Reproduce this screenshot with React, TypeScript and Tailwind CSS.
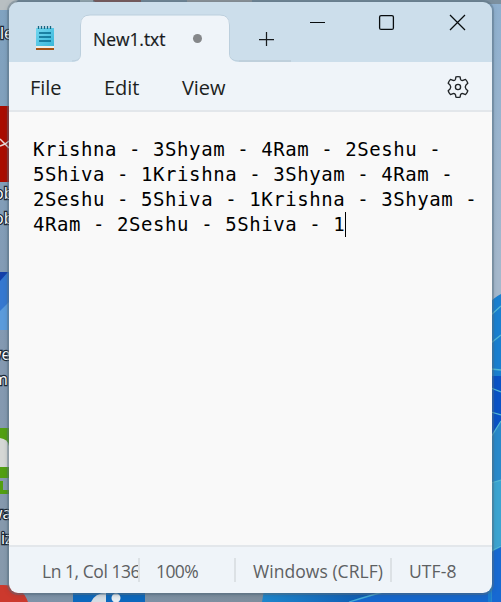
const uiFont = "font-['Open_Sans','Noto_Sans',sans-serif]";

const documentLines = [
  'Krishna - 3Shyam - 4Ram - 2Seshu -',
  '5Shiva - 1Krishna - 3Shyam - 4Ram -',
  '2Seshu - 5Shiva - 1Krishna - 3Shyam -',
  '4Ram - 2Seshu - 5Shiva - 1',
];

function Desktop() {
  return (
    <svg className="absolute inset-0" width="501" height="602" viewBox="0 0 501 602" aria-hidden="true">
      <defs>
        <linearGradient id="sky" x1="0" y1="0" x2="0" y2="1">
          <stop offset="0" stopColor="#8fb0cf" />
          <stop offset="0.45" stopColor="#a5b8cc" />
        </linearGradient>
        <linearGradient id="left" x1="0" y1="0" x2="0" y2="1">
          <stop offset="0" stopColor="#80a3c1" />
          <stop offset="0.6" stopColor="#8499b1" />
          <stop offset="1" stopColor="#8799ab" />
        </linearGradient>
        <linearGradient id="bottom" x1="0" y1="0" x2="1" y2="0">
          <stop offset="0" stopColor="#7f93a9" />
          <stop offset="0.5" stopColor="#7d91a5" />
          <stop offset="1" stopColor="#7e8d9c" />
        </linearGradient>
        <linearGradient id="bloom" x1="0" y1="0" x2="1" y2="0">
          <stop offset="0" stopColor="#1e86cc" />
          <stop offset="0.5" stopColor="#0c55b0" />
          <stop offset="1" stopColor="#1268d8" />
        </linearGradient>
      </defs>
      <rect width="501" height="602" fill="url(#sky)" />
      <rect width="12" height="602" fill="url(#left)" />
      <rect y="590" width="270" height="12" fill="url(#bottom)" />
      <rect width="501" height="4" fill="#7c909f" />
      <path d="M0 0H18L9 10H0Z" fill="#b8bfc2" />
      <path d="M80 0h13v4H80z" fill="#b5c5c8" />
      <path d="M93 0h48v4H97z" fill="#8a4b42" />
      <path d="M187 0h65v4h-65z" fill="#a9a6a5" />
      <path d="M0 106h9v76H0z" fill="#a90c00" />
      <path d="m0 139 9 9M0 146l5-2 4-3" stroke="#ead9d7" strokeWidth="1.5" />
      <path d="M0 272h9v58H0z" fill="#3578d0" />
      <path d="M0 272h8l-8 9z" fill="#143fa9" />
      <path d="m0 311 9-9v28H0z" fill="#5b9bdb" />
      <path d="M0 428h9v50H0z" fill="#529f11" />
      <path d="M0 438q8 1 9 8v21H0z" fill="#d5d7d5" />
      <path d="M0 481h3v9h6v4H0z" fill="#529f11" />
      <path d="M0 585c15-1 24 5 28 17H0z" fill="#cc392d" />
      <g fill="white" stroke="#1b2836" strokeWidth="2.5" paintOrder="stroke" fontFamily="Open Sans" fontSize="16">
        <text x="0" y="39">le</text>
        <text x="-6" y="199">ob</text>
        <text x="-6" y="224">ob</text>
        <text x="-11" y="360">we</text>
        <text x="-7" y="385">m</text>
        <text x="-10" y="519">wa</text>
        <text x="1" y="544">iz</text>
      </g>
      <path d="M73 593h72v9H73z" fill="#0c68bd" />
      <path d="M91 602q4-9 15-9v9z" fill="#d5dce3" />
      <circle cx="116" cy="598" r="4.5" fill="#e7edf2" />
      <path d="M264 590h237v12H262z" fill="url(#bloom)" />
      <path d="M349 602q23-7 41-12h111v12z" fill="#1567cd" />
      <path d="M349 602q23-7 41-12" fill="none" stroke="#45add6" strokeWidth="1.3" />
      <path d="M488 305q5-7 13-11v308h-13z" fill="#197fd0" />
      <path d="M492 376h9v60h-9z" fill="#0952c6" />
      <path d="M491 437 501 422v173l-10 7z" fill="#2989ca" />
      <path d="M492 483 501 480v65l-10 6z" fill="#3ba4d1" />
      <path d="m492 552 9-5v55h-9z" fill="#1769d2" />
      <path d="m491 315 10-9M491 343l10-8M491 369l10 1M491 388l10 4M491 412l10 3M491 437l10-16M491 483l10-3M491 551l10-5" stroke="#54b9d5" strokeWidth="1.3" />
    </svg>
  );
}

function NotepadIcon() {
  return (
    <svg className="mt-[23px] ml-[26px] shrink-0" width="20" height="27" viewBox="0 0 20 27">
      <defs>
        <linearGradient id="paper" x1="0" y1="0" x2="1" y2="1">
          <stop stopColor="#73d7f0" />
          <stop offset="1" stopColor="#39b7da" />
        </linearGradient>
      </defs>
      <path d="M1 22h18v3H1z" fill="#a65212" />
      <path d="M1 21h18v2H1z" fill="#f1eee6" />
      <path d="M1 3h18v18H1z" fill="url(#paper)" />
      <path d="M3.500 1v3M6.500 1v3M9.500 1v3M12.500 1v3M15.500 1v3" stroke="#176681" strokeWidth="1.3" />
      <path d="M4 8h12M4 12h12M4 16h12" stroke="#06688c" strokeWidth="1.7" />
    </svg>
  );
}

function TitleBar() {
  return (
    <header className="flex h-[60px] bg-[#ccdeeb]">
      <div className="w-[63px] shrink-0"><NotepadIcon /></div>
      <div className="relative h-[60px] w-[167px] shrink-0">
        <svg className="absolute inset-0" width="167" height="60" viewBox="0 0 167 60">
          <path d="M0 60c6 0 8-2 8-7V23Q8 13 18 13H148Q158 13 158 23V52q0 8 9 8Z" fill="#eff4f9" />
          <path d="M-3 59C5 59 8.500 58 8.500 52V23Q8.500 13 18 13H148Q157.500 13 157.500 23V52q0 7 9.500 7" fill="none" stroke="#bccfdd" />
        </svg>
        <div className="relative flex h-full items-center pt-[13px] pl-[21px]">
          <span className="w-[76px] text-[17.5px] leading-6 font-medium tracking-[-0.05px] text-[#171a1c] [-webkit-text-stroke:0.2px_#171a1c]">New1.txt</span>
          <span className="ml-[24px] size-[9px] rounded-full bg-[#85878a]" />
        </div>
      </div>
      <div className="h-[60px] w-[52px] shrink-0 border-b-2 border-[#bfd0dc] pt-[29px] pl-[20px]">
        <svg width="16" height="16" viewBox="0 0 16 16"><path d="M7.500 1v14M0 8.500h15" fill="none" stroke="#181b1d" strokeWidth="1.25" /></svg>
      </div>
      <div className="flex pt-[12px]">
        <svg width="201" height="18" viewBox="291 14 201 18" fill="none" stroke="#080c0e">
          <path d="M310 22.500h15" />
          <rect x="379.600" y="15.600" width="13.800" height="13.800" rx="1.500" strokeWidth="1.3" />
          <path d="m450 15 15 15m0-15-15 15" strokeWidth="1.25" />
        </svg>
      </div>
    </header>
  );
}

function SettingsIcon() {
  return (
    <svg width="24" height="24" viewBox="0 0 24 24" fill="none" stroke="#202427" strokeWidth="1.35" strokeLinejoin="round">
      <path d="M9.900 1.900Q12 1.300 14.100 1.900L14.500 4.200Q15.200 5.900 17 5.400L19.500 4.400Q21.200 6.200 21.800 8.300L20 9.900Q18.500 12 20 14.100L21.800 15.700Q21.200 17.800 19.500 19.600L17 18.600Q15.200 18.100 14.500 19.800L14.100 22.100Q12 22.700 9.900 22.100L9.500 19.800Q8.800 18.100 7 18.600L4.500 19.600Q2.800 17.800 2.200 15.700L4 14.100Q5.500 12 4 9.900L2.200 8.300Q2.800 6.200 4.500 4.400L7 5.400Q8.800 5.900 9.500 4.200Z" />
      <circle cx="12" cy="12" r="2.600" />
    </svg>
  );
}

function MenuBar() {
  return (
    <nav className="flex h-[50px] items-start border-b-2 border-[#e3e7eb] bg-[#eff4f9] pt-[11px] pl-[21px] text-[20px] leading-7 tracking-[-0.05px] text-[#1c1f21]">
      <span className="w-[74px] pt-px">File</span>
      <span className="w-[78px] pt-px">Edit</span>
      <span className="pt-px">View</span>
      <button className="mt-[2px] mr-[22px] ml-auto" aria-label="Settings"><SettingsIcon /></button>
    </nav>
  );
}

function Editor() {
  return (
    <main className="h-[433px] bg-[#f9f9f9] pt-[25px] pl-[24px] font-['DejaVu_Sans_Mono',monospace] text-[19px] leading-[25px] tracking-[0.57px] whitespace-pre text-black">
      {documentLines.map((line, index) => (
        <div key={index} className="flex h-[25px]">
          <span>{line}</span>
          {index === documentLines.length - 1 && <span className="h-[25px] w-px bg-black" />}
        </div>
      ))}
    </main>
  );
}

function StatusBar() {
  return (
    <footer className="flex h-[48px] items-start border-t-2 border-[#e3e7eb] bg-[#eff4f9] pt-[11px] pl-[33px] text-[17.5px] leading-[26px] whitespace-nowrap text-[#5d6062]">
      <div className="h-6 w-[98px] overflow-hidden border-r-2 border-[#dce1e5] tracking-[-0.45px]">Ln 1, Col 136</div>
      <div className="h-6 w-[96px] border-r-2 border-[#dce1e5] pl-[16px] tracking-[-0.6px]">100%</div>
      <div className="h-6 w-[156px] border-r-2 border-[#dce1e5] pl-[17px] tracking-[0.05px]">Windows (CRLF)</div>
      <div className="pl-[17px] tracking-[0.1px]">UTF-8</div>
    </footer>
  );
}

export default function App() {
  return (
    <div className={`relative h-[602px] w-[501px] overflow-hidden pt-[2px] pl-[9px] ${uiFont}`}>
      <Desktop />
      <section className="relative h-[591px] w-[483px] overflow-hidden rounded-[9px] shadow-[0_0_0_2px_#5b738160,0_1px_5px_#354b6080]">
        <TitleBar />
        <MenuBar />
        <Editor />
        <StatusBar />
      </section>
    </div>
  );
}
